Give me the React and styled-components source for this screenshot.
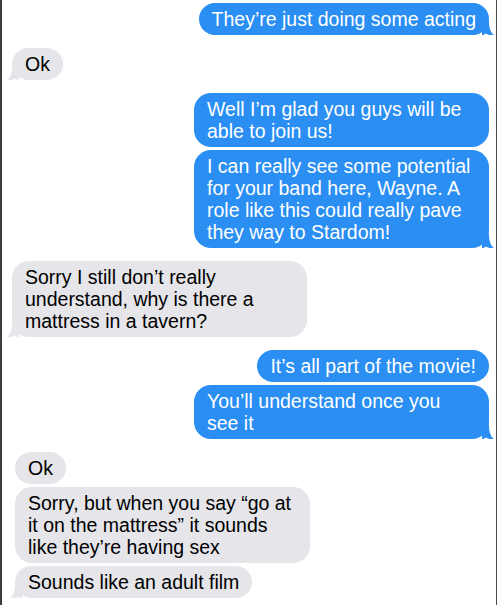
import React from "react";
import styled, { createGlobalStyle } from "styled-components";

const GlobalStyle = createGlobalStyle`
  html, body {
    margin: 0;
    padding: 0;
    background: #ffffff;
  }
`;

const Frame = styled.div`
  box-sizing: border-box;
  width: 497px;
  height: 605px;
  overflow: hidden;
  background: #fff;
  border-left: 2px solid #3c3c3c;
  border-right: 1px solid #4a4a4a;
  padding: 3px 7px 0 10px;
  display: flex;
  flex-direction: column;
  gap: 13px;
  font-family: "Liberation Sans", Arial, sans-serif;
`;

const Group = styled.div`
  display: flex;
  flex-direction: column;
  align-items: ${({ $sent }) => ($sent ? "flex-end" : "flex-start")};
  gap: 3px;
  padding-left: ${({ $inset }) => $inset || 0}px;
`;

const Bubble = styled.div`
  position: relative;
  box-sizing: border-box;
  max-width: 295px;
  padding: 5px 13px;
  border-radius: 17px;
  font-size: 19.5px;
  line-height: 22px;
  background: ${({ $sent }) => ($sent ? "#2a8ef3" : "#e5e5ea")};
  color: ${({ $sent }) => ($sent ? "#ffffff" : "#000000")};
`;

const Tail = styled.svg`
  position: absolute;
  bottom: 0;
  width: 12px;
  height: 14px;
  ${({ $sent }) =>
    $sent ? "right: -5px;" : "left: -5px; transform: scaleX(-1);"}
`;

const BubbleTail = ({ sent }) => (
  <Tail $sent={sent} viewBox="0 0 12 14">
    <path
      d="M0 0 H7 C7 7 8.6 11.6 12 14 C8.4 14.3 5.6 13.5 3.6 12.4 C2.6 13.4 1.2 14 0 14 Z"
      fill={sent ? "#2a8ef3" : "#e5e5ea"}
    />
  </Tail>
);

const groups = [
  { sent: true, messages: ["They\u2019re just doing some acting"] },
  { sent: false, messages: ["Ok"] },
  {
    sent: true,
    messages: [
      "Well I\u2019m glad you guys will be able to join us!",
      "I can really see some potential for your band here, Wayne. A role like this could really pave they way to Stardom!",
    ],
  },
  {
    sent: false,
    messages: [
      "Sorry I still don\u2019t really understand, why is there a mattress in a tavern?",
    ],
  },
  {
    sent: true,
    messages: [
      "It\u2019s all part of the movie!",
      "You\u2019ll understand once you see it",
    ],
  },
  {
    sent: false,
    inset: 3,
    messages: [
      "Ok",
      "Sorry, but when you say \u201cgo at it on the mattress\u201d it sounds like they\u2019re having sex",
      "Sounds like an adult film",
    ],
  },
];

const App = () => {
  return (
    <>
      <GlobalStyle />
      <Frame>
        {groups.map((group, gi) => (
          <Group key={gi} $sent={group.sent} $inset={group.inset}>
            {group.messages.map((text, i) => (
              <Bubble key={i} $sent={group.sent}>
                {text}
                {i === group.messages.length - 1 && <BubbleTail sent={group.sent} />}
              </Bubble>
            ))}
          </Group>
        ))}
      </Frame>
    </>
  );
};

export default App;
